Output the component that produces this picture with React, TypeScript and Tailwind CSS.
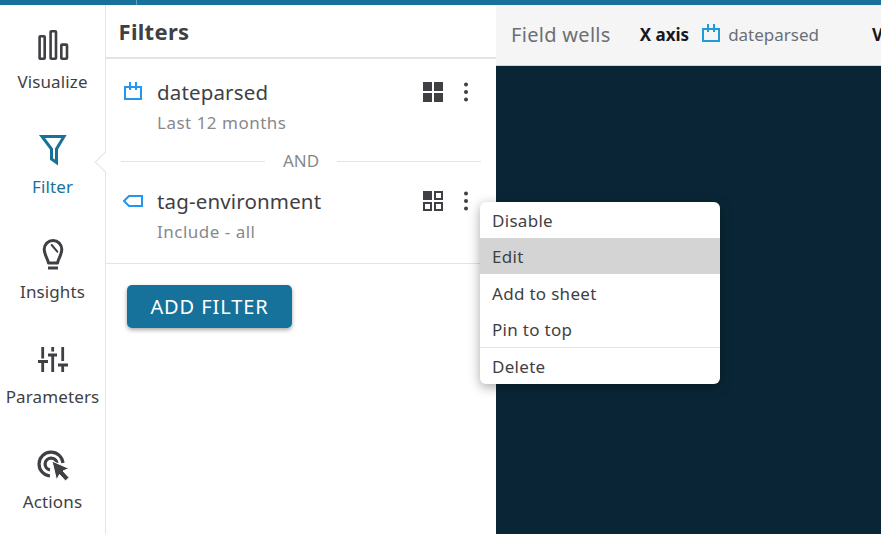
const font = { fontFamily: '"Noto Sans", sans-serif' };

function CalendarIcon({ className }: { className?: string }) {
  return (
    <svg className={className} width="18" height="18" viewBox="0 0 18 18" fill="none" stroke="currentColor" strokeWidth="2">
      <rect x="1" y="5" width="16" height="12" />
      <path d="M6 0V8M12 0V8" />
    </svg>
  );
}

function VisualizeIcon() {
  return (
    <svg width="32" height="32" viewBox="0 0 32 32" fill="none" stroke="#3f3f44" strokeWidth="2.6" strokeLinejoin="round">
      <rect x="2.6" y="6.3" width="5.1" height="22.4" rx="0.8" />
      <rect x="13.6" y="1.3" width="5.4" height="27.4" rx="0.8" />
      <rect x="24.3" y="14.6" width="5.7" height="14.1" rx="0.8" />
    </svg>
  );
}

function FilterIcon() {
  return (
    <svg width="32" height="32" viewBox="0 0 32 32" fill="none" stroke="#17729b" strokeWidth="3">
      <path d="M5 1.5H27L19.5 14V27.5L14.5 24V14Z" />
    </svg>
  );
}

function BulbIcon() {
  return (
    <svg width="32" height="34" viewBox="0 0 32 34" fill="none" stroke="#3f3f44" strokeWidth="3" strokeLinecap="round">
      <path d="M11.5 24C11 20 7.2 16 7.2 10.3A8.8 8.8 0 0 1 24.8 10.3C24.8 16 21 20 20.5 24Z" strokeLinejoin="round" />
      <path d="M14.7 6L20.3 12.7" strokeWidth="2" />
      <path d="M11 29H21" strokeLinecap="butt" />
    </svg>
  );
}

function ParamsIcon() {
  return (
    <svg width="32" height="32" viewBox="0 0 32 32" fill="none" stroke="#3f3f44" strokeWidth="2.8">
      <path d="M5.7 2V13.5M5.7 16.5V27M15.7 2V6.5M15.7 10V27M25.7 2V16M25.7 20V27" />
      <path d="M1 16.5H11M11 10H20M21 20H31" strokeWidth="3" />
    </svg>
  );
}

function ActionsIcon() {
  return (
    <svg width="32" height="32" viewBox="0 0 32 32" fill="none" stroke="#3f3f44" strokeWidth="3.2">
      <path d="M13 26A12 12 0 1 1 26 13" />
      <path d="M13 20A6 6 0 1 1 20 13" />
      <path d="M15 11L32 18.5L26 21L32 27.5L28.5 31L22.5 24.5L19.5 30Z" fill="#3f3f44" stroke="#ffffff" strokeWidth="1" />
    </svg>
  );
}

function GridIcon({ filled }: { filled: boolean }) {
  return (
    <svg width="20" height="20" viewBox="0 0 20 20" fill="#3f3f44" stroke="#3f3f44">
      {filled ? (
        <>
          <rect x="0" y="0" width="9" height="9" stroke="none" />
          <rect x="11" y="0" width="9" height="9" stroke="none" />
          <rect x="0" y="11" width="9" height="9" stroke="none" />
          <rect x="11" y="11" width="9" height="9" stroke="none" />
        </>
      ) : (
        <>
          <rect x="0" y="0" width="9" height="9" stroke="none" />
          <g fill="none" strokeWidth="2">
            <rect x="12" y="1" width="7" height="7" />
            <rect x="1" y="12" width="7" height="7" />
            <rect x="12" y="12" width="7" height="7" />
          </g>
        </>
      )}
    </svg>
  );
}

function DotsIcon() {
  return (
    <svg width="6" height="20" viewBox="0 0 6 20" fill="#3f3f44">
      <circle cx="3" cy="2.5" r="2" />
      <circle cx="3" cy="10" r="2" />
      <circle cx="3" cy="17.5" r="2" />
    </svg>
  );
}

function NavItem({ icon, label, active }: { icon: React.ReactNode; label: string; active?: boolean }) {
  return (
    <div className="flex h-[105px] flex-col items-center">
      <div className="flex h-[42px] items-center justify-center">{icon}</div>
      <div className={`mt-[4px] text-[17px] leading-[22px] tracking-[0.12px] ${active ? "text-[#17729b]" : "text-[#3f3f44]"}`}>{label}</div>
    </div>
  );
}

function FilterRow({ icon, iconTop, name, sub, filled }: { icon: React.ReactNode; iconTop: string; name: string; sub: string; filled: boolean }) {
  return (
    <div className="flex h-[77px] pl-[17px] pr-[27px]">
      <div className={`w-[34px] text-[#2196f3] ${iconTop}`}>{icon}</div>
      <div className="flex-1 pt-[10px]">
        <div className="text-[20.5px] leading-[28px] tracking-[0.15px] text-[#3f3f44]">{name}</div>
        <div className="mt-[6px] text-[17px] leading-[22px] tracking-[0.5px] text-[#87898c]">{sub}</div>
      </div>
      <div className="flex gap-[20px] pt-[14px]">
        <GridIcon filled={filled} />
        <DotsIcon />
      </div>
    </div>
  );
}

function MenuItem({ label, active, low }: { label: string; active?: boolean; low?: boolean }) {
  return (
    <div className={`flex h-[36.2px] items-center px-[12px] text-[17px] tracking-[0.3px] text-[#3f3f44] ${low ? "pt-[3px]" : "pt-[1px]"} ${active ? "bg-[#d4d4d4]" : ""}`}>{label}</div>
  );
}

export default function App() {
  return (
    <div style={font} className="relative flex h-[534px] w-[881px] flex-col overflow-hidden bg-white">
      <div className="relative h-[5px] shrink-0 bg-[#17729b]">
        <div className="absolute left-[136px] top-0 h-[5px] w-px bg-[#5f9fbc]" />
      </div>
      <div className="flex min-h-0 flex-1">
        <aside className="relative w-[106px] shrink-0 border-r border-[#e4e4e4] pt-[20px]">
          <NavItem icon={<VisualizeIcon />} label="Visualize" />
          <NavItem icon={<FilterIcon />} label="Filter" active />
          <NavItem icon={<BulbIcon />} label="Insights" />
          <NavItem icon={<ParamsIcon />} label="Parameters" />
          <NavItem icon={<ActionsIcon />} label="Actions" />
          <div className="absolute right-[-9px] top-[149px] h-[16px] w-[16px] rotate-45 border-b border-l border-[#e4e4e4] bg-white" />
        </aside>
        <section className="w-[390px] shrink-0">
          <header className="flex h-[54px] items-center border-b-[2px] border-[#e4e4e4] pl-[12.5px] text-[22px] font-bold tracking-[0.3px] text-[#3f3f44]">Filters</header>
          <div className="pt-[9px]">
            <FilterRow iconTop="pt-[14px]" icon={<CalendarIcon className="ml-[1px]" />} name="dateparsed" sub="Last 12 months" filled />
          </div>
          <div className="ml-[15px] mr-[15px] flex h-[32px] items-center gap-[18px] text-[17px] text-[#87898c]">
            <div className="h-px flex-1 bg-[#e4e4e4]" />
            <span>AND</span>
            <div className="h-px flex-1 bg-[#e4e4e4]" />
          </div>
          <div className="border-b border-[#e4e4e4] pb-[9px]">
            <FilterRow
              iconTop="pt-[17px]"
              icon={
                <svg width="20" height="14" viewBox="0 0 20 14" fill="none" stroke="currentColor" strokeWidth="2">
                  <path d="M19 2V12H6L1 7L6 2Z" />
                </svg>
              }
              name="tag-environment"
              sub="Include - all"
              filled={false}
            />
          </div>
          <div className="pl-[21px] pt-[21px]">
            <button className="h-[43px] w-[165px] rounded-[5px] bg-[#17729b] text-[20px] tracking-[0.9px] text-white shadow-[0_2px_4px_rgba(0,0,0,0.35)]">ADD FILTER</button>
          </div>
        </section>
        <main className="flex min-w-0 flex-1 flex-col">
          <div className="flex h-[61px] shrink-0 items-center overflow-hidden border-b border-[#d5d5d5] bg-[#f5f5f5] pl-[15px] whitespace-nowrap">
            <span className="text-[20px] tracking-[0.3px] text-[#6b6f75]">Field wells</span>
            <span className="ml-[29px] text-[17px] font-bold text-[#16191f]">X axis</span>
            <CalendarIcon className="ml-[13px] mb-[4px] shrink-0 text-[#1f9cd8]" />
            <span className="ml-[8px] text-[17px] text-[#6b6f75]">dateparsed</span>
            <span className="ml-[53px] text-[17px] font-bold text-[#16191f]">Value</span>
          </div>
          <div className="flex-1 bg-[#0a2636]" />
        </main>
      </div>
      <div className="absolute left-[480px] top-[202px] w-[240px] overflow-hidden rounded-[6px] bg-white shadow-[0_3px_12px_rgba(0,0,0,0.35)]">
        <MenuItem label="Disable" />
        <MenuItem label="Edit" active />
        <MenuItem label="Add to sheet" low />
        <MenuItem label="Pin to top" low />
        <div className="h-px bg-[#e4e4e4]" />
        <MenuItem label="Delete" />
      </div>
    </div>
  );
}
